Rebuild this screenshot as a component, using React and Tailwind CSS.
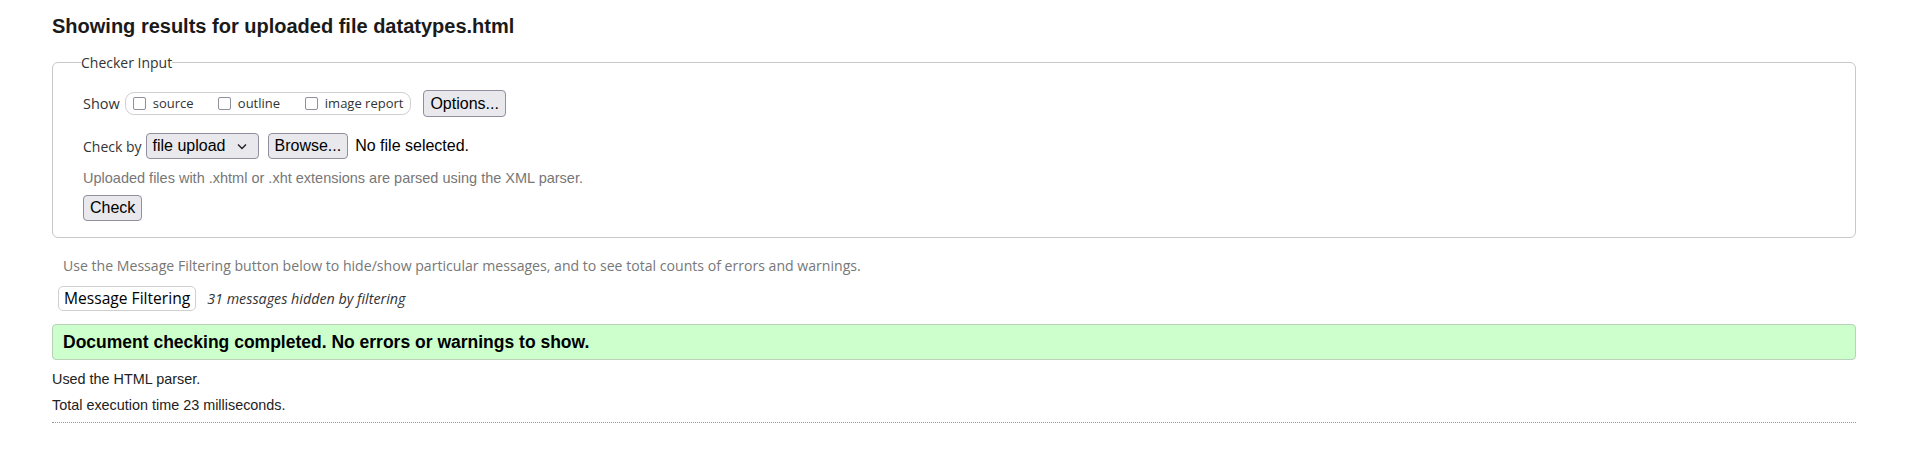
import React from "react";

const ARIAL = "font-['Liberation_Sans',Arial,sans-serif]";
const UI = "font-['Open_Sans','Noto_Sans',sans-serif]";

function Box() {
  return (
    <span className="inline-block shrink-0 w-[13px] h-[13px] border border-[#8f8f9d] rounded-[2px] bg-white mr-[7px]" />
  );
}

function Btn({ children, className = "" }) {
  return (
    <span
      className={`inline-flex items-center h-[26px] px-[6px] border border-[#8f8f9d] rounded-[4px] bg-[#e9e9ed] text-[16px] text-black ${ARIAL} ${className}`}
    >
      {children}
    </span>
  );
}

export default function App() {
  return (
    <div className="w-[1915px] h-[452px] bg-white text-[#222]">
      <div className="pl-[52px] w-[1856px]">
        <h2 className={`${ARIAL} font-bold text-[20px] leading-[24px] pt-[14px] text-[#1a1a1a]`}>
          Showing results for uploaded file datatypes.html
        </h2>

        <fieldset className="mt-[16px] border border-[#c8c8c8] rounded-[6px] pl-[28px] pr-4 pb-[16px]">
          <legend className={`${UI} text-[14px] leading-[17px] text-[#333]`}>Checker Input</legend>

          <div className={`flex items-center h-[27px] mt-[19px] ml-[2px] ${UI} text-[13px] text-[#333]`}>
            <span className="mr-[5px] text-[14.5px]">Show</span>
            <div className="flex items-center h-[23px] border border-[#cfcfcf] rounded-[9px] pl-[7px] pr-[7px]">
              <span className="flex items-center w-[85px]">
                <Box />
                source
              </span>
              <span className="flex items-center w-[87px]">
                <Box />
                outline
              </span>
              <span className="flex items-center">
                <Box />
                image report
              </span>
            </div>
            <Btn className="ml-[12px] h-[27px]">Options...</Btn>
          </div>

          <div className="flex items-center h-[26px] mt-[16px] ml-[2px]">
            <span className={`${UI} text-[14px] text-[#333] mr-[4px]`}>Check by</span>
            <Btn className="pr-[11px]">
              file upload
              <svg className="ml-[11px]" width="10" height="7" viewBox="0 0 10 7">
                <path d="M1 1.5 L5 5.5 L9 1.5" fill="none" stroke="#222" strokeWidth="1.4" />
              </svg>
            </Btn>
            <Btn className="ml-[9px]">Browse...</Btn>
            <span className={`${ARIAL} ml-[7px] text-[16px] text-black`}>No file selected.</span>
          </div>

          <p className={`${ARIAL} text-[14.5px] leading-[17px] text-[#777] mt-[11px] ml-[2px]`}>
            Uploaded files with .xhtml or .xht extensions are parsed using the XML parser.
          </p>

          <div className="mt-[8px] ml-[2px] flex">
            <Btn className="h-[25px] px-[4px]">Check</Btn>
          </div>
        </fieldset>

        <p className={`${UI} text-[14.1px] leading-[18px] text-[#777] mt-[19px] ml-[11px]`}>
          Use the Message Filtering button below to hide/show particular messages, and to see total counts of errors and warnings.
        </p>

        <div className="flex items-center mt-[11px] ml-[6px] h-[25px]">
          <span className={`inline-flex items-center h-[25px] px-[5px] border border-[#cfcfcf] rounded-[5px] bg-white text-[15.6px] text-black ${UI}`}>
            Message Filtering
          </span>
          <span className={`${UI} italic text-[14.3px] text-[#333] ml-[11px]`}>31 messages hidden by filtering</span>
        </div>

        <div className="mt-[13px] h-[36px] flex items-center bg-[#ccffcc] border border-[#b9d1b9] rounded-[4px] pl-[10px]">
          <span className={`${ARIAL} font-bold text-[17.5px] text-black`}>
            Document checking completed. No errors or warnings to show.
          </span>
        </div>

        <p className={`${ARIAL} text-[14.4px] leading-[17px] text-[#222] mt-[11px]`}>Used the HTML parser.</p>
        <p className={`${ARIAL} text-[14.4px] leading-[17px] text-[#222] mt-[9px]`}>Total execution time 23 milliseconds.</p>

        <div className="mt-[8px] border-t border-dotted border-[#999]" />
      </div>
    </div>
  );
}
